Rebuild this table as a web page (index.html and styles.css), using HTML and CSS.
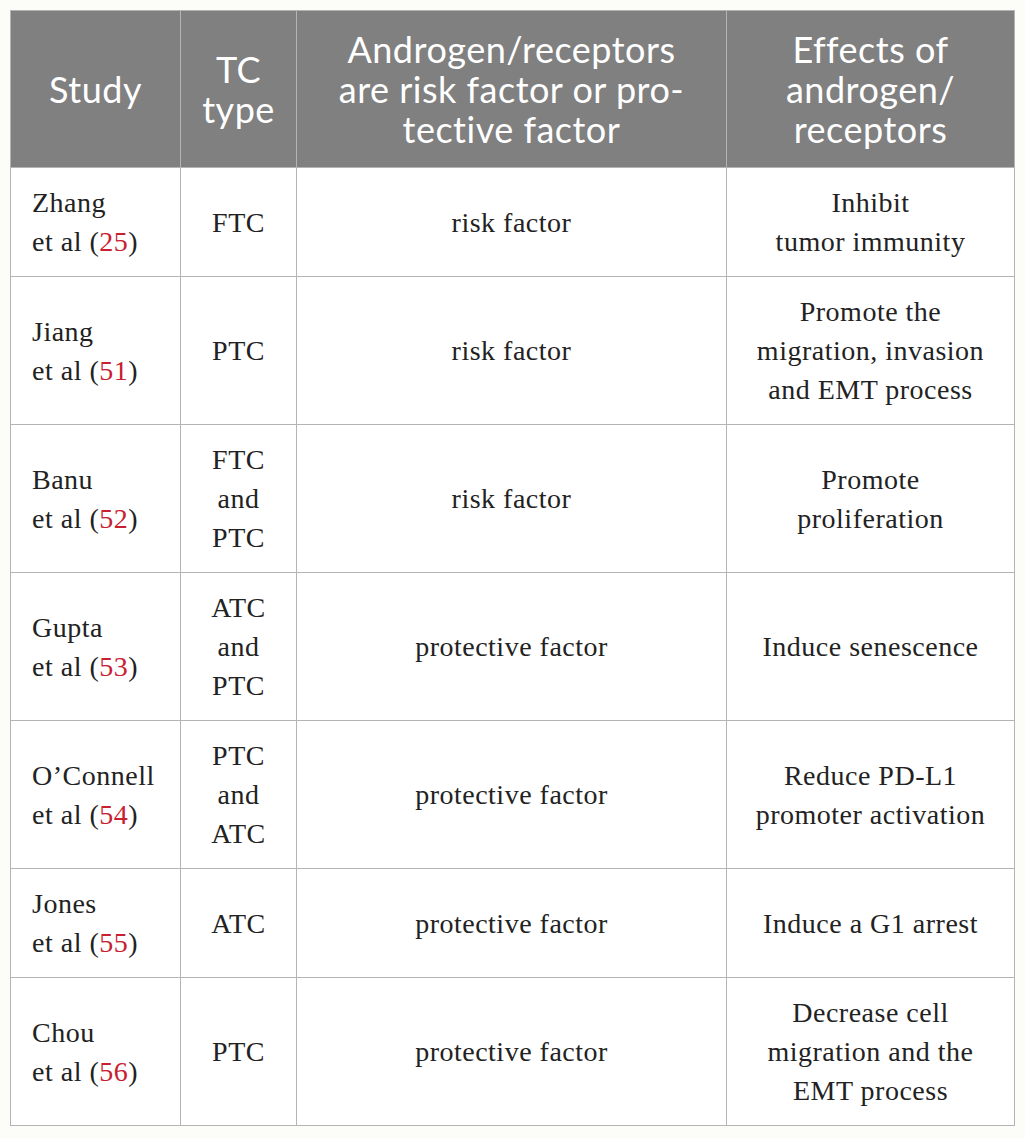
FILE: index.html
```html
<!DOCTYPE html>
<html lang="en">

<head>
    <meta charset="utf-8">
    <title>Androgen and thyroid cancer studies</title>
    <link rel="stylesheet" href="styles.css">
</head>

<body>

    <table class="studier">
        <colgroup>
            <col class="c-study">
            <col class="c-type">
            <col class="c-factor">
            <col class="c-effect">
        </colgroup>
        <thead>
            <tr>
                <th>Study</th>
                <th>TC<br>type</th>
                <th>Androgen/receptors<br>are risk factor or pro-<br>tective factor</th>
                <th>Effects of<br>androgen/<br>receptors</th>
            </tr>
        </thead>
        <tbody>
            <tr>
                <td class="venstre">Zhang<br>et al (<span class="ref">25</span>)</td>
                <td>FTC</td>
                <td>risk factor</td>
                <td>Inhibit<br>tumor immunity</td>
            </tr>
            <tr>
                <td class="venstre">Jiang<br>et al (<span class="ref">51</span>)</td>
                <td>PTC</td>
                <td>risk factor</td>
                <td>Promote the<br>migration, invasion<br>and EMT process</td>
            </tr>
            <tr>
                <td class="venstre">Banu<br>et al (<span class="ref">52</span>)</td>
                <td>FTC<br>and<br>PTC</td>
                <td>risk factor</td>
                <td>Promote<br>proliferation</td>
            </tr>
            <tr>
                <td class="venstre">Gupta<br>et al (<span class="ref">53</span>)</td>
                <td>ATC<br>and<br>PTC</td>
                <td>protective factor</td>
                <td>Induce senescence</td>
            </tr>
            <tr>
                <td class="venstre">O’Connell<br>et al (<span class="ref">54</span>)</td>
                <td>PTC<br>and<br>ATC</td>
                <td>protective factor</td>
                <td>Reduce PD-L1<br>promoter activation</td>
            </tr>
            <tr>
                <td class="venstre">Jones<br>et al (<span class="ref">55</span>)</td>
                <td>ATC</td>
                <td>protective factor</td>
                <td>Induce a G1 arrest</td>
            </tr>
            <tr>
                <td class="venstre">Chou<br>et al (<span class="ref">56</span>)</td>
                <td>PTC</td>
                <td>protective factor</td>
                <td>Decrease cell<br>migration and the<br>EMT process</td>
            </tr>
        </tbody>
    </table>

</body></html>
```

FILE: styles.css
```css
* {
    box-sizing: border-box;
}

body {
    background-color: #fcfcf8;
    margin: 0;
    padding: 10px 11px 10px 10px;
}

.studier {
    border-collapse: collapse;
    width: 1004px;
    table-layout: fixed;
    background-color: #ffffff;
}

.c-study {
    width: 170px;
}

.c-type {
    width: 116px;
}

.c-factor {
    width: 430px;
}

.c-effect {
    width: 288px;
}

th,
td {
    border: 1px solid #b4b4b4;
    text-align: center;
    vertical-align: middle;
}

th {
    background-color: #808080;
    color: #ffffff;
    font-family: 'Lato', sans-serif;
    font-weight: normal;
    font-size: 36px;
    letter-spacing: 0.5px;
    line-height: 40px;
    padding: 18px 4px;
}

td {
    font-family: 'Liberation Serif', serif;
    font-size: 28px;
    letter-spacing: 0.5px;
    line-height: 39px;
    color: #222222;
    padding: 15px 6px;
}

td.venstre {
    text-align: left;
    padding-left: 21px;
}

.ref {
    color: #c8202f;
}
```
